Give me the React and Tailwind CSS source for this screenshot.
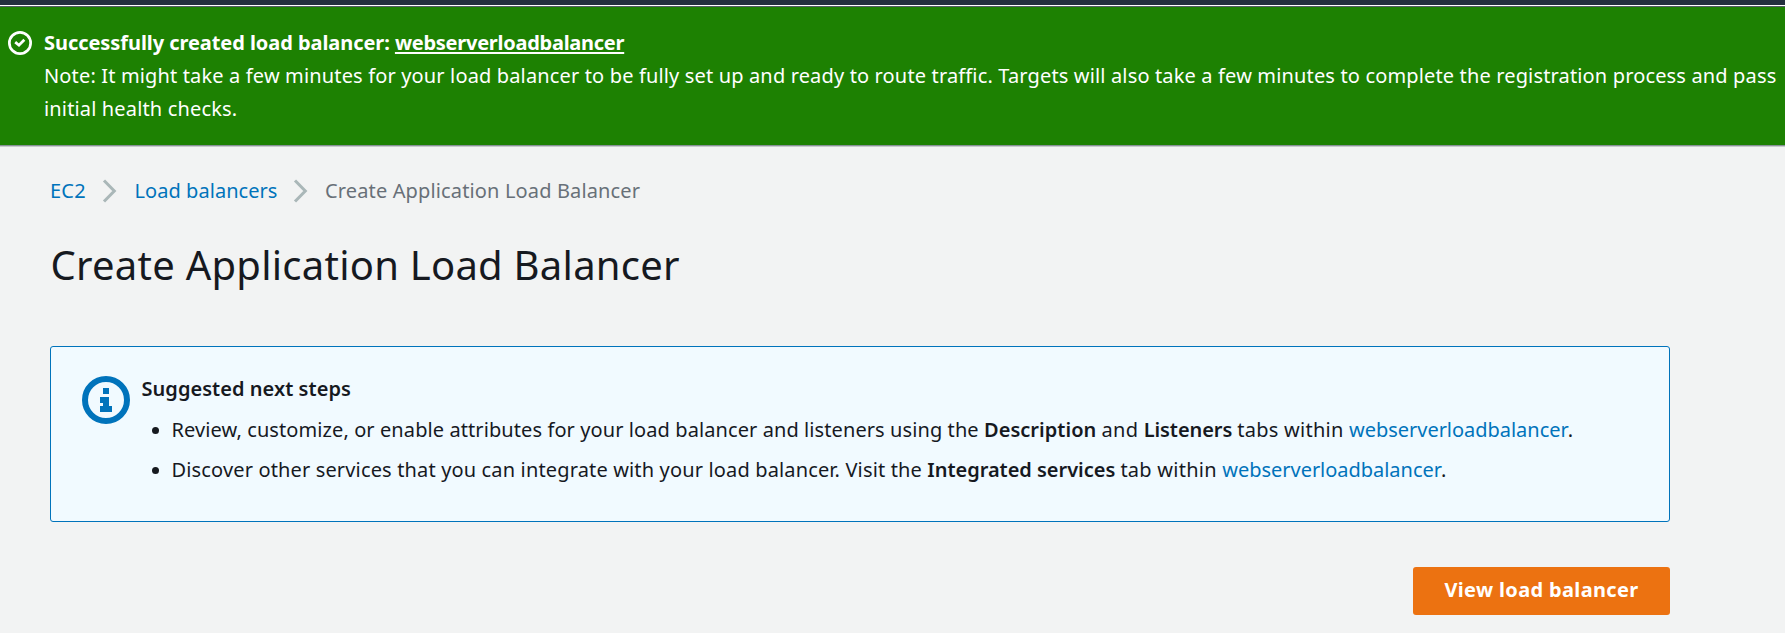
function SuccessIcon() {
  return (
    <svg viewBox="0 0 16 16" className="mt-[5px] size-6 shrink-0" fill="none" stroke="#fff">
      <circle cx="8" cy="8" r="7.1" strokeWidth="1.8" />
      <path d="M4.8 7.4 7.3 9.5 10.9 5.8" strokeWidth="1.8" />
    </svg>
  );
}

function InfoIcon() {
  return (
    <svg viewBox="0 0 16 16" className="size-12 shrink-0">
      <circle cx="8" cy="8" r="7" fill="none" stroke="#0073bb" strokeWidth="2" />
      <path d="M7 4H9V6H7ZM6 7H9V10H10V12H6V10H7V9H6Z" fill="#0073bb" />
    </svg>
  );
}

function Chevron() {
  return (
    <svg viewBox="0 0 16 24" className="mt-[5px] h-6 w-4 shrink-0" fill="none" stroke="#aab7b8" strokeWidth="3">
      <path d="M2 1.5 12.3 12 2 22.5" />
    </svg>
  );
}

function Bullet({ children }) {
  return (
    <li className="flex h-[40px] items-start">
      <span className="mt-[14px] mr-[12.5px] ml-[11px] size-[7px] shrink-0 rounded-full bg-[#16191f]" />
      <span className="whitespace-pre">{children}</span>
    </li>
  );
}

export default function App() {
  return (
    <div className="flex h-[633px] w-[1785px] flex-col overflow-hidden bg-[#f2f3f3] font-['Noto_Sans',sans-serif] text-[20px] leading-[33px] text-[#16191f]">
      <div className="h-[5px] shrink-0 bg-[#232f3e]" />
      <div className="h-px shrink-0 bg-white" />
      <div className="h-px shrink-0 bg-[#545b64]" />
      <div className="flex h-[138px] shrink-0 gap-[12px] bg-[#1d8102] pt-[19px] pl-2 text-white">
        <SuccessIcon />
        <div className="whitespace-nowrap">
          <div className="font-bold tracking-[-0.06px]">
            Successfully created load balancer:{" "}
            <a className="tracking-[-0.26px] underline decoration-2 underline-offset-[2px]">webserverloadbalancer</a>
          </div>
          <div className="tracking-[0.15px]">
            Note: It might take a few minutes for your load balancer to be fully set up and ready to route traffic. Targets will also take a few minutes to complete the registration process and pass
            <br />
            initial health checks.
          </div>
        </div>
      </div>
      <div className="h-px shrink-0 bg-[#879196]" />
      <div className="h-px shrink-0 bg-[#c6cacb]" />

      <nav className="mt-[27px] flex h-[33px] shrink-0 pl-[50px] whitespace-nowrap">
        <a className="w-[52px] tracking-[0.2px] text-[#0073bb]">EC2</a>
        <Chevron />
        <a className="ml-[16.5px] w-[158.5px] tracking-[0.05px] text-[#0073bb]">Load balancers</a>
        <Chevron />
        <span className="ml-[16px] tracking-[0.14px] text-[#687078]">Create Application Load Balancer</span>
      </nav>

      <h1 className="mt-[28px] shrink-0 pl-[50.5px] text-[40px] leading-[60px] tracking-[0.25px] whitespace-nowrap">
        Create Application Load Balancer
      </h1>

      <section className="mt-[51px] ml-[50px] flex h-[176px] w-[1620px] shrink-0 gap-[11px] rounded-[3px] border border-[#0073bb] bg-[#f1faff] pt-[29px] pl-[31px]">
        <InfoIcon />
        <div className="-mt-[4px]">
          <h2 className="h-[41px] pl-[0.5px] font-semibold tracking-[0.04px]">Suggested next steps</h2>
          <ul>
            <Bullet>
              <span className="tracking-[0.09px]">Review, customize, or enable attributes for your load balancer and listeners using the </span>
              <b className="font-semibold tracking-[0.03px]">Description </b>
              <span className="tracking-[0.25px]">and </span>
              <b className="font-semibold tracking-[-0.08px]">Listeners </b>
              <span className="tracking-[0.25px]">tabs within </span>
              <a className="tracking-[-0.03px] text-[#0073bb]">webserverloadbalancer</a>
              <span className="-ml-[1px]">.</span>
            </Bullet>
            <Bullet>
              <span className="tracking-[0.15px]">Discover other services that you can integrate with your load balancer. Visit the </span>
              <b className="font-semibold tracking-[-0.03px]">Integrated services </b>
              <span className="tracking-[0.25px]">tab within </span>
              <a className="tracking-[-0.03px] text-[#0073bb]">webserverloadbalancer</a>
              <span className="-ml-[1px]">.</span>
            </Bullet>
          </ul>
        </div>
      </section>

      <button className="mt-[45px] ml-[1413px] flex h-[48px] w-[257px] shrink-0 items-start justify-center rounded-[3px] bg-[#ec7211] pt-[6px] font-bold tracking-[0.35px] whitespace-nowrap text-white">
        View load balancer
      </button>
    </div>
  );
}
